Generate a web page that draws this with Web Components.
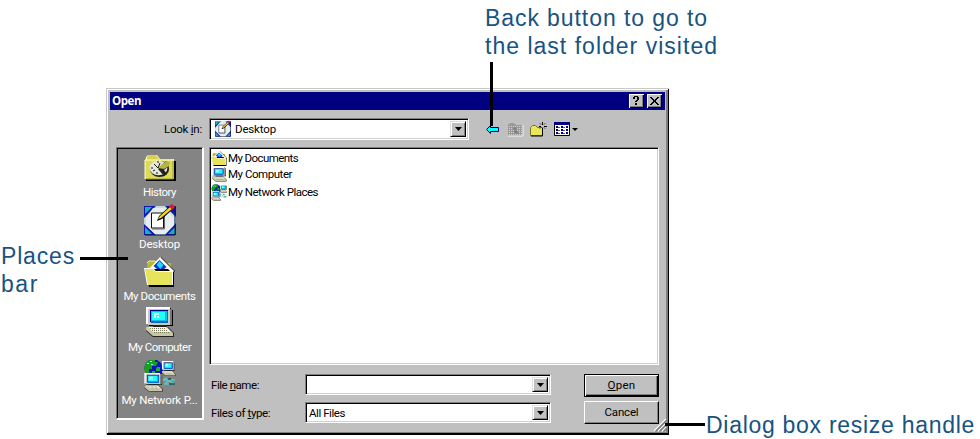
<!DOCTYPE html>
<html lang="en"><head><meta charset="utf-8"><title>Open</title>
<style>
html,body{margin:0;width:980px;height:439px;overflow:hidden;background:#fff}
body{font-family:Roboto,"Liberation Sans",sans-serif;font-size:11.5px;color:#000}
</style></head><body>
<annotated-stage></annotated-stage>
<script>
const define=(name,html,setup)=>customElements.define(name,class extends HTMLElement{
  connectedCallback(){
    if(this.shadowRoot)return;
    const t=document.createElement('template');t.innerHTML=html;
    this.attachShadow({mode:'open'}).append(t.content.cloneNode(true));
    if(setup)setup(this,this.shadowRoot);
  }
});

/* Icons, drawn on a pixel grid */
const globe='<path d="M6 1h8l4 3 2 4v6l-5 4H7l-4-4-2-5 2-5z" fill="#0818c0"/><path d="M6 1h6v2h3l-2 4H9v3H6v3l2 3-1 2-4-3-2-6 2-5z" fill="#18a020"/><path d="M14 8h3v4h-4v-2zM9 12h3v3H9z" fill="#20b020"/><path d="M7 2h2v1H7zM4 4h2v1H4zM8 5h2v1H8z" fill="#80ffff"/>';
const pc='<path d="M3 1h24v2h2v16H5v-2H3z" fill="#000"/><path d="M2 0h24v17H2z" fill="#fff"/><path d="M4 2h24v16H4z" fill="#c8c8c4"/><path d="M26 2h2v16h-2z" fill="#777"/><path d="M6 3h18v12H6z" fill="#000080"/><path d="M7 4h17v12H7z" fill="#0868d0"/><path d="M7 4h16v10H7z" fill="#08c0e0"/><path d="M8 5h13v8H8z" fill="#20ffff"/><path d="M10 6h5v2h-3v3h-2zM13 9h2v2h-2z" fill="#d8ffff"/><path d="M9 18h14v3H9z" fill="#222"/><path d="M2 20h22l6 6v4H9l-7-6z" fill="#222"/><path d="M2 20h21l6 6v3H9l-7-6z" fill="#c8c8a8"/><path d="M4 20h18l5 5H9z" fill="#f4f4f0"/><path d="M6 21.500h16M8 23.500h16M10 25.500h16" stroke="#77755c" stroke-dasharray="1 1"/>';
const desk='<path d="M0 1h32v29H0z" fill="#c8dce0"/><path d="M0 1h12L0 13zM21 1h11v11zM0 19v11h12zM32 18v12H21z" fill="#1018b0"/><path d="M1 2h7L1 9zM31 22v7h-7zM1 22v7h7z" fill="#18b0c0"/><path d="M31 1v29H1" fill="none" stroke="#001050"/><path d="M9 3h12l9 10v7l-9 9H11L2 20v-7z" fill="#e8eef0"/><path d="M7.500 8h12v15h-12z" fill="#fff" stroke="#111"/><path d="M20.500 9v15H8" fill="none" stroke="#666"/><path d="M13 16l2-5L26 1l3 3-11 10z" fill="#000"/><path d="M14 14l2-3L26 2l2 2-11 9z" fill="#f4d820"/><path d="M25 1l3-2 3 3-3 3z" fill="#e01828"/>';
const docs='<path d="M3 6l2-2h6l2 2h14v18H4z" fill="#bcb834"/><path d="M3 6l2-2h6l2 2" fill="none" stroke="#f4f080"/><path d="M17 0l14 14-2 3-2-1L17 4z" fill="#222"/><path d="M5 12L16 0l14 14-2 2H6z" fill="#fff"/><path d="M15.500 3l7 7-6 5-7-6z" fill="#1030d0"/><path d="M15.500 4l4 4-3 4-4-4z" fill="#20d8ff"/><path d="M1 12h23l3 3h3v15H5z" fill="#000"/><path d="M0 11h9l3 3h17v14H3z" fill="#fff"/><path d="M1 12h8l3 3h16v13H4z" fill="#e6e45c"/>';
const hist='<path d="M1 7h31v20H2z" fill="#000"/><path d="M2 3l2-2h9l3 4h14v5H1z" fill="#fffdb0"/><path d="M3 3l1-2h8l3 4h14v3H3z" fill="#d6d250"/><path d="M1 6h29v19H1z" fill="#dddb55"/><path d="M1 25V6h29" fill="none" stroke="#ffffc0"/><path d="M29 7v18H2" fill="none" stroke="#96943c"/><ellipse cx="15.500" cy="15" rx="9.600" ry="8" fill="#222"/><ellipse cx="14.500" cy="14" rx="8.900" ry="7.300" fill="#e8e8d8"/><path d="M14 15l8-8 3 5-5 4 3 4-3 2z" fill="#222"/><path d="M14 14l3-3 6-4 3 1-1 4-5 3z" fill="#b8b348"/><path d="M14 14l-4-4m4 4l2-5M7 14h2m5-7v2m-1 11v-2m-4-1l2-1" stroke="#111"/>';
const net=globe+'<g transform="translate(18 2) scale(.48 .5)">'+pc+'</g><path d="M24 19l-4 2h12M22 24l4-2 6 3h-11" fill="none" stroke="#40e8e8"/><path d="M25 20h3M26 25h6" stroke="#111"/><g transform="translate(0 14) scale(.66 .62)">'+pc+'</g>';
const I={
 history:[32,28,hist],desktop:[32,31,desk],documents:[31,30,docs],computer:[31,31,pc],network:[33,33,net],
 back:[13,11,'<path d="M.5 5.500l4-4v2h8v4h-8v2z" fill="#00ffff" stroke="#000064"/><path d="M4 4.500h8M2 5.500h10" stroke="#00ffff"/>'],
 up:[17,15,'<path d="M1 3l2-2h4l2 2h7v11H1z" fill="#999"/><path d="M16 3v11H1" fill="none" stroke="#f5f5f5"/><path d="M2 4.500h13M2 6.500h13M2 8.500h13M2 10.500h13M2 12.500h13" stroke="#d2d2d2" stroke-dasharray="1 1"/><path d="M6 7l2-2 2 2zM7.500 7v4h4" fill="#777" stroke="#888"/>'],
 new:[17,16,'<path d="M.5 6.500l2-2h3l2 2h5v8H.5z" fill="#e9e657" stroke="#77752c"/><path d="M12.500 7v8H1" fill="none" stroke="#000"/><path d="M12.500 1v3m0 3v2M9 5.500h2m3 0h3M10 2.500l1 1m3 3l1 1m0-5l-1 1m-4 4l1-1" stroke="#000"/>'],
 view:[16,14,'<path d="M.5.5h15v13H.5z" fill="#fff" stroke="#000"/><path d="M0 0h16v3H0z" fill="#000080"/><path d="M2 4h2v2H2zm5 0h2v2H7zm5 0h2v2h-2zM2 7h2v2H2zm5 0h2v2H7zm5 0h2v2h-2zM2 10h2v2H2zm5 0h2v2H7zm5 0h2v2h-2z" fill="#000080"/><path d="M4 5.500h2M9 5.500h2M4 8.500h2M9 8.500h2M4 11.500h2M9 11.500h2" stroke="#555"/>'],
 down:[7,4,'<path d="M0 0h7L3.500 4z" fill="#000"/>'],
 help:[15,14,'<path d="M5 2h4v1H5zM4 3h2v2H4zM8 3h2v3H8zM7 6h2v1H7zM6 7h2v1H6zM6 9h2v2H6z" fill="#000"/>'],
 close:[15,14,'<path d="M3 3h2v1h1v1h1v1h1V5h1V4h1V3h2v1h-1v1h-1v1H9v2h1v1h1v1h1v1h-2v-1H9V9H8V8H7v1H6v1H5v1H3v-1h1V9h1V8h1V6H5V5H4V4H3z" fill="#000"/>'],
 grip:[13,13,'<path d="M0 12L12 0M4 12l8-8M8 12l4-4" stroke="#fff" stroke-width="1.200"/><path d="M1.500 12.500l11-11M5.500 12.500l7-7M9.500 12.500l3-3" stroke="#777" stroke-width="1.500"/>']
};
define('pixel-icon','<style>:host{display:block;flex:none;line-height:0}svg{display:block;overflow:visible;width:100%;height:100%}</style><svg aria-hidden="true" preserveAspectRatio="none"></svg>',(h,r)=>{
  const [w,ht,m]=I[h.getAttribute('name')],s=r.querySelector('svg');
  h.style.width=(h.getAttribute('w')||w)+'px';h.style.height=(h.getAttribute('h')||ht)+'px';
  s.setAttribute('viewBox',`0 0 ${w} ${ht}`);s.innerHTML=m;
});

/* A single line of text tracked to a given width */
define('fit-label','<style>:host{display:block;flex:none;white-space:nowrap}span{display:inline-block}</style><span><slot></slot></span>',(h,r)=>{
  const w=+h.getAttribute('w'),s=r.querySelector('span');h.style.width=w+'px';
  s.style.letterSpacing=(w-s.getBoundingClientRect().width)/h.textContent.length+'px';
});

customElements.define('place-item',class extends HTMLElement{connectedCallback(){
  const a=n=>this.getAttribute(n);
  this.attachShadow({mode:'open'}).innerHTML=`<style>:host{display:flex;flex-direction:column;align-items:center;justify-content:flex-end;color:#fff;line-height:14px}
fit-label{margin-top:${a('gap')||3}px}</style><pixel-icon name="${a('icon')}"></pixel-icon><fit-label w="${a('w')}">${a('label')}</fit-label>`;
}});
customElements.define('places-bar',class extends HTMLElement{connectedCallback(){
  this.attachShadow({mode:'open'}).innerHTML=`<style>:host{display:grid;grid-template-rows:51px 52px 52px 51px 53px;box-sizing:border-box;background:#848484;border:1px solid #777;border-right:2px solid #fff;border-bottom:2px solid #fff;box-shadow:inset 1px 1px #000}</style>
  <place-item icon="history" label="History" w="33"></place-item><place-item icon="desktop" label="Desktop" w="41" gap="1"></place-item><place-item icon="documents" label="My Documents" w="72" gap="2"></place-item><place-item icon="computer" label="My Computer" w="63" gap="2"></place-item><place-item icon="network" label="My Network P..." w="76" gap="1"></place-item>`;
}});

define('combo-box',`<style>:host{display:flex;box-sizing:border-box;background:#fff;border:1px solid;border-color:#808080 #fff #fff #808080;box-shadow:inset 1px 1px #000,inset -1px -1px #d0d0d0;padding:2px;align-items:center}
.content{display:flex;align-items:center;flex:1;gap:4px;padding-left:1px}
.arrow{width:16px;align-self:stretch;box-sizing:border-box;background:#c0c0c0;border:1px solid;border-color:#e0e0e0 #000 #000 #e0e0e0;box-shadow:inset 1px 1px #fff,inset -1px -1px #808080;display:flex;align-items:center;justify-content:center}</style>
<div class="content"><slot></slot></div><div class="arrow"><pixel-icon name="down"></pixel-icon></div>`);

define('push-button',`<style>:host{display:flex;box-sizing:border-box;background:#c0c0c0;border:1px solid;border-color:#fff #000 #000 #fff;box-shadow:inset -1px -1px #808080;align-items:center;justify-content:center;padding-bottom:2px}
:host([default]){border-color:#000;box-shadow:inset 1px 1px #fff,inset -1px -1px #000,inset -2px -2px #808080}</style><slot></slot>`);

define('file-list',`<style>:host{display:block;box-sizing:border-box;background:#fff;border:1px solid;border-color:#808080 #fff #fff #808080;box-shadow:inset 1px 1px #000,inset -1px -1px #d0d0d0;padding:2px 1px}
.row{display:flex;align-items:center;height:16px;gap:1px;line-height:15px}</style>
<div class="row"><pixel-icon name="documents" w="16" h="15"></pixel-icon><fit-label w="70">My Documents</fit-label></div>
<div class="row" style="height:17px"><pixel-icon name="computer" w="16" h="15"></pixel-icon><fit-label w="64">My Computer</fit-label></div>
<div class="row" style="height:18px"><pixel-icon name="network" w="16" h="17"></pixel-icon><fit-label w="90">My Network Places</fit-label></div>`);

define('title-bar',`<style>:host{display:flex;height:18px;box-sizing:border-box;background:#000080;color:#fff;align-items:center;padding:0 3px 0 2px;gap:3px;font:bold 11.5px/16px "Open Sans",sans-serif}
fit-label{margin-right:auto}.b{width:15px;height:14px;box-sizing:border-box;background:#c0c0c0;box-shadow:inset 1px 1px #fff,inset -1px -1px #000,inset -2px -2px #808080}</style>
<fit-label w="29">Open</fit-label><div class="b"><pixel-icon name="help"></pixel-icon></div><div class="b"><pixel-icon name="close"></pixel-icon></div>`);

define('open-dialog',`<style>:host{display:block;position:relative;box-sizing:border-box;width:563px;height:347px;background:#c0c0c0;padding:4px;box-shadow:inset 1px 1px #c8c8c8,inset -1px -2px #000,inset 2px 2px #fff,inset -3px -3px #808080}
.top{display:flex;align-items:center;height:22px;margin-top:8px;padding-left:54px}
.top>fit-label{margin-right:7px}.top combo-box{width:260px;height:22px;margin-right:17px}
.main{display:grid;grid-template-columns:88px 450px;column-gap:5px;padding:7px 0 0 6px}
places-bar{height:273px}.right{display:grid;grid-template-rows:222px 22px 23px;grid-template-columns:96px 246px 1fr;align-content:start;row-gap:5px}
file-list{grid-column:1/4;height:218px}.right combo-box{height:21px}.right push-button{width:75px;height:23px;justify-self:end}
.right>fit-label{align-self:center;padding-left:2px}.grip{position:absolute;right:2px;bottom:3px}</style>
<title-bar></title-bar>
<div class="top"><fit-label w="38">Look <u>i</u>n:</fit-label><combo-box><pixel-icon name="desktop" w="16" h="16" style="margin-left:2px"></pixel-icon><fit-label w="41">Desktop</fit-label></combo-box>
<pixel-icon name="back"></pixel-icon><pixel-icon name="up" style="margin-left:8px"></pixel-icon><pixel-icon name="new" style="margin-left:6px"></pixel-icon><pixel-icon name="view" style="margin-left:7px"></pixel-icon><pixel-icon name="down" w="6" h="3" style="margin-left:2px"></pixel-icon></div>
<div class="main"><places-bar></places-bar><div class="right"><file-list></file-list>
<fit-label w="48">File <u>n</u>ame:</fit-label><combo-box></combo-box><push-button default><fit-label w="28"><u>O</u>pen</fit-label></push-button>
<fit-label w="59">Files of <u>t</u>ype:</fit-label><combo-box style="margin-top:1px"><fit-label w="36">All Files</fit-label></combo-box><push-button><fit-label w="34">Cancel</fit-label></push-button></div></div>
<pixel-icon class="grip" name="grip"></pixel-icon>`);

define('call-out',`<style>:host{display:block;position:absolute;color:#175481;font:23px/28px "Liberation Sans",sans-serif}</style><slot></slot>`);
define('annotated-stage',`<style>:host{display:block;position:relative;width:980px;height:439px}open-dialog{position:absolute;left:106px;top:88px}.line{position:absolute;background:#000}</style>
<open-dialog></open-dialog>
<div class="line" style="left:490px;top:62px;width:3px;height:64px"></div><div class="line" style="left:80px;top:257px;width:48px;height:3px"></div><div class="line" style="left:665px;top:423px;width:40px;height:3px"></div>
<call-out style="left:485px;top:4px"><fit-label w="223">Back button to go to</fit-label><fit-label w="233">the last folder visited</fit-label></call-out>
<call-out style="left:1px;top:242px"><fit-label w="74">Places</fit-label><fit-label w="38">bar</fit-label></call-out>
<call-out style="left:706px;top:411px"><fit-label w="269">Dialog box resize handle</fit-label></call-out>`);
</script></body></html>
